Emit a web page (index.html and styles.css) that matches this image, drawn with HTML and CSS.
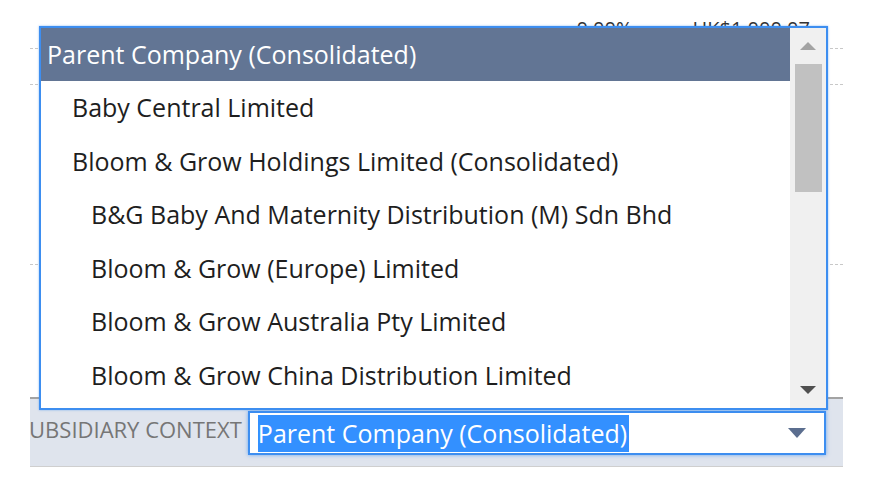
FILE: index.html
```html
<!DOCTYPE html>
<html lang="en">
<head>
    <meta charset="UTF-8">
    <meta name="viewport" content="width=device-width, initial-scale=1.0">
    <title>Subsidiary Context</title>
    <link rel="stylesheet" href="styles.css">
</head>
<body>
    <div class="page">
        <!-- report table behind the open list -->
        <div class="report">
            <div class="row totals">
                <span class="num">0.00%</span>
                <span class="num">HK$1,000.07</span>
            </div>
            <div class="row r2"></div>
            <div class="row r3"></div>
            <div class="row r4"></div>

            <div class="context-bar">
                <span class="context-label">SUBSIDIARY CONTEXT</span>
                <div class="select-field">
                    <span class="select-value"><span class="selected-text">Parent Company (Consolidated)</span></span>
                    <span class="select-arrow"></span>
                </div>
            </div>
        </div>

        <!-- open dropdown list -->
        <div class="dropdown-list">
            <ul class="options">
                <li class="option active">Parent Company (Consolidated)</li>
                <li class="option level1">Baby Central Limited</li>
                <li class="option level1">Bloom &amp; Grow Holdings Limited (Consolidated)</li>
                <li class="option level2">B&amp;G Baby And Maternity Distribution (M) Sdn Bhd</li>
                <li class="option level2">Bloom &amp; Grow (Europe) Limited</li>
                <li class="option level2">Bloom &amp; Grow Australia Pty Limited</li>
                <li class="option level2">Bloom &amp; Grow China Distribution Limited</li>
            </ul>
            <div class="scrollbar">
                <div class="scroll-btn"><span class="arrow-up"></span></div>
                <div class="scroll-thumb"></div>
                <div class="scroll-track"></div>
                <div class="scroll-btn"><span class="arrow-down"></span></div>
            </div>
        </div>
    </div>
</body>
</html>
```

FILE: styles.css
```css
body { margin: 0; background: #fff; font-family: "Open Sans", "Liberation Sans", sans-serif; }
.page { position: relative; width: 894px; height: 484px; overflow: hidden; }

.report { margin-left: 30px; width: 813px; }
.row { border-bottom: 1px dashed #c8c8c8; box-sizing: border-box; }
.totals { height: 49px; display: flex; justify-content: flex-end; gap: 60px; padding: 18px 33px 0 0; font-size: 20px; color: #333; line-height: 22px; }
.r2 { height: 36px; }
.r3 { height: 180px; }
.r4 { height: 38px; border-bottom: none; }

.context-bar { margin-top: 94px; height: 70px; box-sizing: border-box; background: #dfe4ed; border-top: 2px solid #a3a3a3; border-bottom: 1px solid #cfcfcf; display: flex; align-items: flex-start; overflow: hidden; }
.context-label { margin-left: -13px; margin-top: 15px; font-size: 22px; color: #767676; white-space: nowrap; }
.select-field { margin-left: 6px; margin-top: 12px; width: 578px; height: 44px; box-sizing: border-box; background: #fff; border: 2px solid #3d8ef0; box-shadow: 0 0 4px rgba(61, 142, 240, 0.7); display: flex; align-items: center; padding-left: 8px; }
.select-value { flex: 1; font-size: 25px; line-height: 37px; }
.selected-text { background: #3390ff; color: #fff; display: inline-block; padding-right: 2px; }
.select-arrow { width: 0; height: 0; border-left: 9px solid transparent; border-right: 9px solid transparent; border-top: 10px solid #5b6e8f; margin-right: 18px; }

.dropdown-list { position: absolute; left: 39px; top: 26px; width: 789px; height: 384px; box-sizing: border-box; background: #fff; border: 2px solid #3d8ef0; box-shadow: 0 0 2px rgba(61, 142, 240, 0.6); display: flex; }
.options { flex: 1; margin: 0; padding: 0; list-style: none; overflow: hidden; }
.option { height: 53.5px; line-height: 53.5px; font-size: 25px; color: #1e1e1e; white-space: nowrap; padding-left: 31px; }
.option.active { background: #627594; color: #fff; padding-left: 6px; height: 53px; line-height: 53px; }
.option.level2 { padding-left: 50px; }

.scrollbar { width: 36px; background: #f0f0f0; display: flex; flex-direction: column; }
.scroll-btn { height: 36px; display: flex; align-items: center; justify-content: center; }
.arrow-up { width: 0; height: 0; border-left: 8px solid transparent; border-right: 8px solid transparent; border-bottom: 8px solid #a3a3a3; }
.arrow-down { width: 0; height: 0; border-left: 8px solid transparent; border-right: 8px solid transparent; border-top: 8px solid #505050; }
.scroll-thumb { height: 128px; margin: 0 4px 0 5px; background: #c1c1c1; }
.scroll-track { flex: 1; }
```
